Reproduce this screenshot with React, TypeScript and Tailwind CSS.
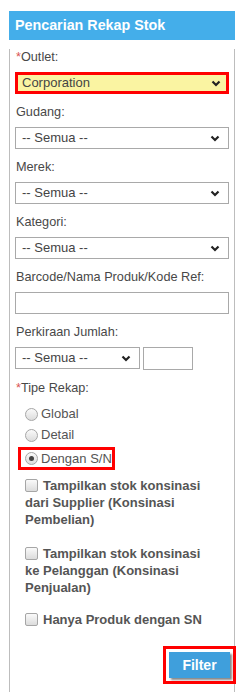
import { ReactNode } from "react";

function Chevron() {
  return (
    <svg width="10" height="7" viewBox="0 0 10 7" className="shrink-0">
      <path d="M1.5 1.5 L5 5 L8.5 1.5" fill="none" stroke="#222" strokeWidth="2.2" />
    </svg>
  );
}

function Select({ value, w = "w-[214px]", hl = false }: { value: string; w?: string; hl?: boolean }) {
  return (
    <div
      className={
        hl
          ? `${w} h-[22px] flex items-center justify-between pl-[4px] pr-[5px] border-[3px] border-[#ff0000] bg-[#faf4a2]`
          : `${w} h-[22px] flex items-center justify-between pl-[6px] pr-[8px] border border-[#a9a9a9] bg-white`
      }
    >
      <span className="text-[13px] text-[#444]">{value}</span>
      <Chevron />
    </div>
  );
}

function Label({ children, req = false }: { children: ReactNode; req?: boolean }) {
  return (
    <div className="mt-[10px] mb-[7px] leading-[16px] text-[12.7px] text-[#484848] pl-[1px]">
      {req && <span className="text-[#d9534f]">*</span>}
      {children}
    </div>
  );
}

function Radio({ label, on = false }: { label: string; on?: boolean }) {
  return (
    <div className="flex items-center gap-[3px] h-[16px]">
      <span className="w-[13px] h-[13px] rounded-full border border-[#a6a6a6] bg-gradient-to-b from-[#fafafa] to-[#dcdcdc] flex items-center justify-center">
        {on && <span className="w-[5px] h-[5px] rounded-full bg-[#444]" />}
      </span>
      <span className="text-[13px] text-[#555]">{label}</span>
    </div>
  );
}

function Check({ children }: { children: ReactNode }) {
  return (
    <div className="pl-[10px] pr-[18px] text-[13px] font-bold leading-[17px] text-[#555]">
      <span className="inline-block align-[-2px] w-[13px] h-[13px] rounded-[2px] border border-[#a6a6a6] bg-gradient-to-b from-[#fafafa] to-[#dcdcdc] mr-[5px]" />
      {children}
    </div>
  );
}

export default function App() {
  return (
    <div className="min-h-[692px] bg-white pt-[11px] pl-[9px] font-['Liberation_Sans',Arial,sans-serif]">
      <div className="w-[226px]">
        <div className="h-[29px] bg-[#44aeea] text-white font-bold text-[14.3px] leading-[29px] pl-[6px]">
          Pencarian Rekap Stok
        </div>
        <div className="border-x border-b border-[#bdbdbd] h-[645px] pl-[5px] pr-[4px]">
          <div className="-mt-[1px]">
            <Label req>Outlet:</Label>
          </div>
          <Select value="Corporation" hl />
          <Label>Gudang:</Label>
          <Select value="-- Semua --" />
          <Label>Merek:</Label>
          <Select value="-- Semua --" />
          <Label>Kategori:</Label>
          <Select value="-- Semua --" />
          <Label>Barcode/Nama Produk/Kode Ref:</Label>
          <div className="w-[214px] h-[22px] border border-[#a9a9a9] bg-white" />
          <Label>Perkiraan Jumlah:</Label>
          <div className="flex gap-[3px]">
            <Select value="-- Semua --" w="w-[125px]" />
            <div className="w-[50px] h-[23px] border border-[#a9a9a9] bg-white" />
          </div>
          <Label req>Tipe Rekap:</Label>

          <div className="pl-[10px] flex flex-col gap-[5px] mt-[10px]">
            <Radio label="Global" />
            <Radio label="Detail" />
          </div>
          <div className="ml-[3px] mt-[4px] w-[97px] h-[23px] border-[3px] border-[#ff0000] flex items-center pl-[4px]">
            <Radio label="Dengan S/N" on />
          </div>

          <div className="mt-[7px]">
            <Check>Tampilkan stok konsinasi dari Supplier (Konsinasi Pembelian)</Check>
          </div>
          <div className="mt-[17px]">
            <Check>Tampilkan stok konsinasi ke Pelanggan (Konsinasi Penjualan)</Check>
          </div>
          <div className="mt-[15px]">
            <Check>Hanya Produk dengan SN</Check>
          </div>

          <div className="flex justify-end mt-[24px]">
            <button className="w-[61px] h-[26px] bg-[#3f9fdc] text-white font-bold text-[14px] shadow-[2px_2px_2px_#888] outline-[3px] outline-[#ff0000] outline-offset-[3px]">
              Filter
            </button>
          </div>
        </div>
      </div>
    </div>
  );
}
